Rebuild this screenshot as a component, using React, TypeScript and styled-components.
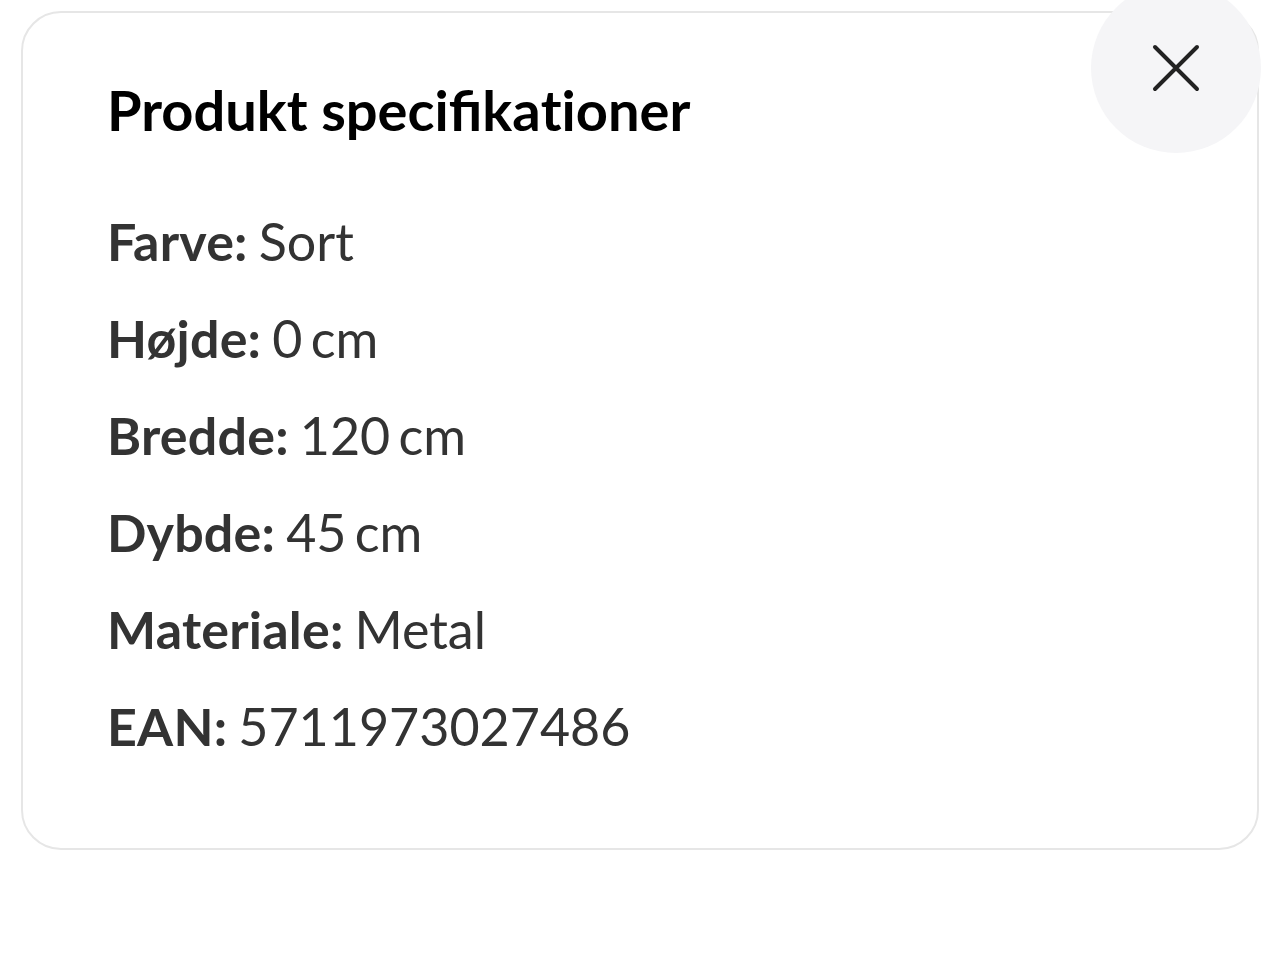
import React from 'react';
import styled, { createGlobalStyle } from 'styled-components';

const GlobalStyle = createGlobalStyle`
	html, body {
		margin: 0;
		padding: 0;
		background: #ffffff;
		font-family: Lato, "Open Sans", "Liberation Sans", sans-serif;
	}
	* {
		box-sizing: border-box;
	}
`;

const Page = styled.div`
	width: 1280px;
	height: 960px;
	padding: 11px 21px 0 21px;
	overflow: hidden;
`;

const Card = styled.section`
	position: relative;
	border: 2px solid #e6e6e6;
	border-radius: 40px;
	background: #ffffff;
	padding: 62px 80px 73px 84px;
`;

const CloseButton = styled.button`
	position: absolute;
	top: -30px;
	right: -4px;
	width: 170px;
	height: 170px;
	border: none;
	border-radius: 50%;
	background: #f5f5f7;
	display: flex;
	align-items: center;
	justify-content: center;
	cursor: pointer;
	padding: 0;
`;

const Title = styled.h2`
	margin: 0 0 48px 0;
	font-size: 56px;
	line-height: 70px;
	font-weight: 700;
	color: #000000;
`;

// the reference keeps the "fi" ligature but not the "ti" one
const Plain = styled.span`
	font-variant-ligatures: none;
`;

const SpecList = styled.dl`
	margin: 0;
	display: flex;
	flex-direction: column;
`;

const SpecRow = styled.div`
	font-size: 52px;
	line-height: 97px;
	color: #333333;
	white-space: nowrap;
`;

const Label = styled.dt`
	display: inline;
	font-weight: 700;
	margin: 0;
	letter-spacing: 0.2px;
`;

const Value = styled.dd`
	display: inline;
	font-weight: 400;
	margin: 0 0 0 11px;
	word-spacing: -5px;
`;

const specs = [
	{ label: 'Farve:', value: 'Sort' },
	{ label: 'Højde:', value: '0 cm' },
	{ label: 'Bredde:', value: '120 cm' },
	{ label: 'Dybde:', value: '45 cm' },
	{ label: 'Materiale:', value: 'Metal' },
	{ label: 'EAN:', value: '5711973027486' },
];

const App = () => {
	return (
		<Page>
			<GlobalStyle />
			<Card>
				<CloseButton aria-label='Luk'>
					<svg width='48' height='48' viewBox='0 0 48 48' fill='none'>
						<path d='M3 3 L45 45 M45 3 L3 45' stroke='#222222' strokeWidth='4' strokeLinecap='round' />
					</svg>
				</CloseButton>
				<Title>
					Produkt specifika<Plain>tioner</Plain>
				</Title>
				<SpecList>
					{specs.map((s) => (
						<SpecRow key={s.label}>
							<Label>{s.label}</Label>
							<Value>{s.value}</Value>
						</SpecRow>
					))}
				</SpecList>
			</Card>
		</Page>
	);
};

export default App;
